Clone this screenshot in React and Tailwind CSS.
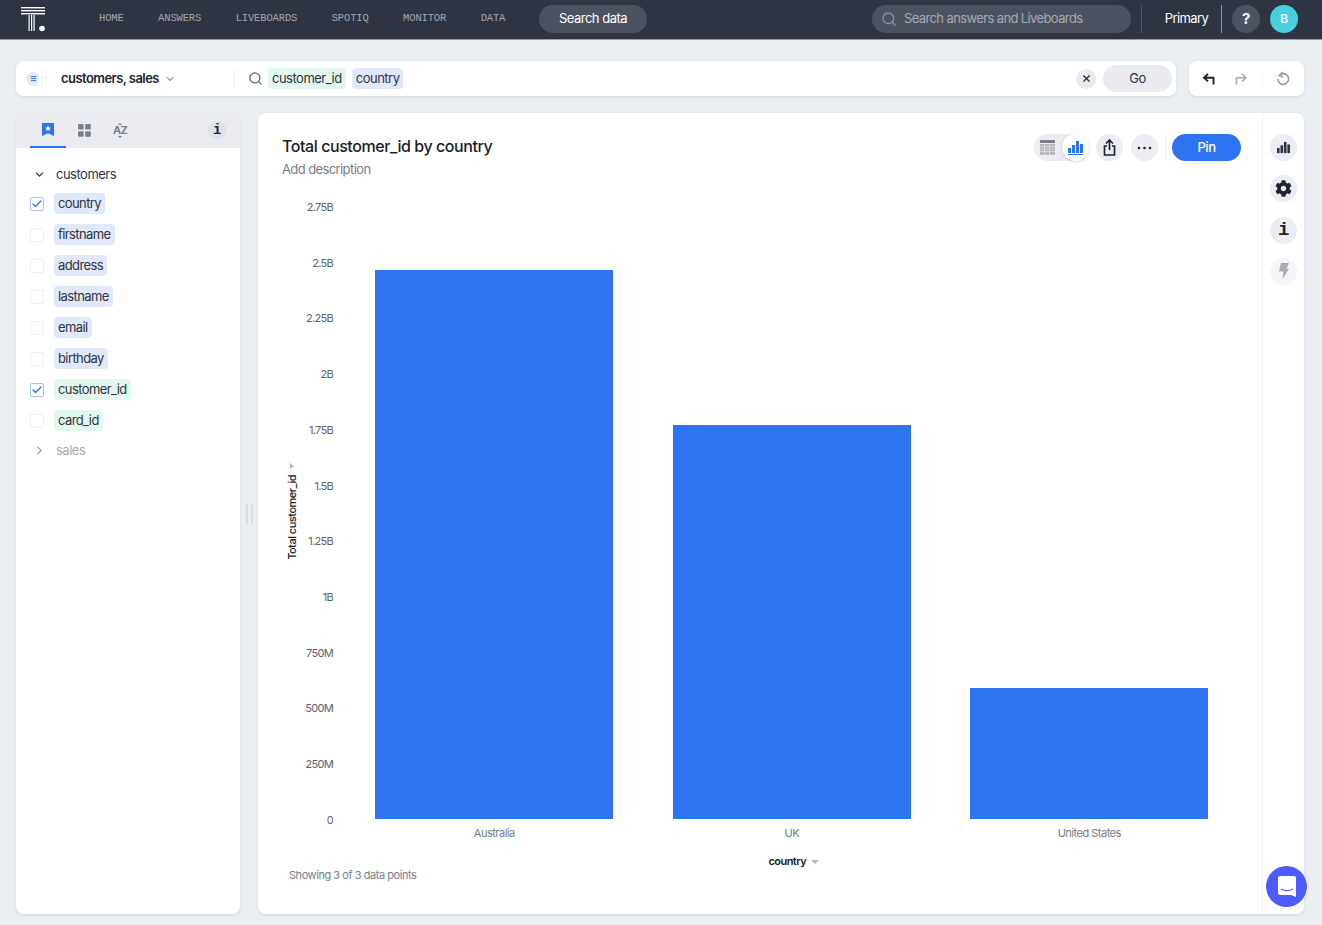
import { Search, X, ChevronDown, ChevronRight, Check } from 'lucide-react';
import { FaCog } from 'react-icons/fa';

const navItems = ['HOME', 'ANSWERS', 'LIVEBOARDS', 'SPOTIQ', 'MONITOR', 'DATA'];

const columns = [
  { name: 'country', checked: true, attr: true },
  { name: 'firstname', attr: true },
  { name: 'address', attr: true },
  { name: 'lastname', attr: true },
  { name: 'email', attr: true },
  { name: 'birthday', attr: true },
  { name: 'customer_id', checked: true },
  { name: 'card_id' },
];

const yTicks = ['2.75B', '2.5B', '2.25B', '2B', '1.75B', '1.5B', '1.25B', '1B', '750M', '500M', '250M', '0'];

const bars = [
  { label: 'Australia', height: 'h-[549px]' },
  { label: 'UK', height: 'h-[394px]' },
  { label: 'United States', height: 'h-[131px]' },
];

function Logo() {
  return (
    <svg width="25" height="26" viewBox="0 0 25 26" className="text-white" fill="currentColor">
      <rect x="0" y="0" width="24" height="1.400" />
      <rect x="0" y="3" width="24" height="1.400" />
      <rect x="0" y="6" width="24" height="1.400" />
      <rect x="7.500" y="8" width="1.200" height="16" />
      <rect x="10" y="8" width="1.200" height="16" />
      <rect x="12.500" y="8" width="1.200" height="16" />
      <circle cx="21" cy="21.500" r="2.800" />
    </svg>
  );
}

function TopNav() {
  return (
    <div className="h-10 shrink-0 bg-[#2f3442] border-b border-[#9a9ea8] flex items-center pb-px">
      <div className="w-[99px] pl-[21px] shrink-0 pt-[2px]">
        <Logo />
      </div>
      <div className="flex gap-[34.5px] w-[440px] shrink-0 font-['Liberation_Mono',monospace] text-[10.5px] tracking-[-0.15px] text-[#a3a7b0]">
        {navItems.map((item) => (
          <span key={item}>{item}</span>
        ))}
      </div>
      <div className="w-[108px] h-7 rounded-full bg-[#4d5261] text-white text-[13px] flex items-center justify-center">
        Search data
      </div>
      <div className="ml-[225px] w-[259px] h-7 rounded-full bg-[#4d5261] text-[#a6aab3] text-[13px] tracking-[-0.62px] flex items-center pl-[9px] gap-[7px]">
        <Search size={16} className="text-[#8d919b]" />
        <span>Search answers and Liveboards</span>
      </div>
      <div className="ml-[10px] w-px h-7 bg-[#4d5261]" />
      <div className="w-[79px] text-center text-white text-[13px] tracking-[-0.6px] pl-[10px]">Primary</div>
      <div className="w-px h-7 bg-[#8b8f99]" />
      <div className="ml-[10px] w-7 h-7 rounded-full bg-[#4d5261] text-white font-bold text-[15px] flex items-center justify-center">?</div>
      <div className="ml-[10px] w-7 h-7 rounded-full bg-[#48d0e0] text-white text-[12px] font-medium flex items-center justify-center">B</div>
    </div>
  );
}

function Chip({ children, attr }) {
  return (
    <span className={`h-[21px] px-[4px] rounded-[4px] text-[13px] leading-[20px] text-[#2f3442] ${attr ? 'bg-[#e0e8fa]' : 'bg-[#e2f8ef]'}`}>
      {children}
    </span>
  );
}

function SearchBar() {
  return (
    <div className="flex mt-[21px] ml-4 mr-[18px] h-[35px] gap-[13px]">
      <div className="flex-1 bg-white rounded-[8px] shadow-[0_1px_3px_rgba(40,50,70,0.12)] flex items-center">
        <div className="w-[23px] flex justify-end shrink-0">
          <div className="w-3 h-[14px] rounded-full bg-[#dfe7fb] flex flex-col items-center justify-center gap-[1px]">
            <span className="w-[5px] h-px bg-[#3f7bf0]" />
            <span className="w-[5px] h-px bg-[#3f7bf0]" />
            <span className="w-[5px] h-px bg-[#3f7bf0]" />
          </div>
        </div>
        <div className="ml-[2px] w-px h-5 bg-[#f0f1f4]" />
        <div className="w-[192px] shrink-0 pl-[19px] flex items-center gap-[5px] text-[13px] font-semibold tracking-[-0.55px] text-[#1f2430]">
          customers, sales
          <ChevronDown size={12} className="text-[#4b505c]" />
        </div>
        <div className="w-px h-5 bg-[#f0f1f4]" />
        <Search size={15} className="ml-[13px] text-[#5d6270]" />
        <div className="ml-[5px] flex gap-[6px]">
          <Chip>customer_id</Chip>
          <Chip attr>country</Chip>
        </div>
        <div className="ml-auto w-5 h-5 rounded-full bg-[#eaebf0] flex items-center justify-center">
          <X size={11} strokeWidth={2.5} className="text-[#1f2430]" />
        </div>
        <div className="ml-[7px] mr-[4px] w-[69px] h-[27px] rounded-full bg-[#eaebf0] text-[13px] text-[#2f3442] flex items-center justify-center">Go</div>
      </div>
      <div className="w-[115px] bg-white rounded-[8px] shadow-[0_1px_3px_rgba(40,50,70,0.12)] flex items-center pl-[13px]">
        <svg width="14" height="14" viewBox="0 0 14 14" fill="none" stroke="#1f2430" strokeWidth="1.9">
          <path d="M6 2 2 5.700 6 9.400M2 5.700h9.500v6.800" />
        </svg>
        <svg className="ml-[18px]" width="14" height="14" viewBox="0 0 14 14" fill="none" stroke="#a9acb4" strokeWidth="1.6">
          <path d="M8 2l4 3.700L8 9.400M12 5.700H2.500v6.800" />
        </svg>
        <div className="ml-[14px] w-px h-5 bg-[#f4f5f7]" />
        <svg className="ml-[13px]" width="15" height="15" viewBox="0 0 14 14" fill="none" stroke="#9a9da6" strokeWidth="1.5">
          <path d="M3 4.200a5 5 0 1 1-1.200 3.300M6.300 1 3 4.200l3.600 1.400" />
        </svg>
      </div>
    </div>
  );
}

function ColumnRow({ name, checked, attr }) {
  return (
    <div className="h-[31px] flex items-center pl-[14px] tracking-[-0.6px]">
      <div className={`w-[14px] h-[14px] rounded-[2px] border flex items-center justify-center ${checked ? 'border-[#a9c3f7]' : 'border-[#eeeff2]'}`}>
        {checked && <Check size={12} strokeWidth={2.6} className="text-[#2e74f0]" />}
      </div>
      <div className="ml-[10px] flex">
        <Chip attr={attr}>{name}</Chip>
      </div>
    </div>
  );
}

function SidePanel() {
  return (
    <div className="w-[224px] shrink-0 bg-white rounded-[8px] shadow-[0_1px_3px_rgba(40,50,70,0.12)] overflow-hidden">
      <div className="h-[35px] bg-[#eaecf1] flex items-center relative">
        <div className="ml-[14px] w-[36px] h-[35px] border-b-2 border-[#2e74f0] flex items-center justify-center">
          <svg width="12" height="13" viewBox="0 0 12 13" fill="#2e74f0">
            <path d="M0 0h12v13L6 10.300 0 13z" />
            <path fill="#fff" d="m6 2.600.9 1.900 2 .2-1.500 1.400.4 2L6 7.100l-1.800 1 .4-2L3.100 4.700l2-.2z" />
          </svg>
        </div>
        <svg className="ml-[12px]" width="13" height="13" viewBox="0 0 13 13" fill="#7a7f8b">
          <rect width="5.600" height="5.600" rx="1.200" />
          <rect x="7.200" width="5.600" height="5.600" rx="1.200" />
          <rect y="7.200" width="5.600" height="5.600" rx="1.200" />
          <rect x="7.200" y="7.200" width="5.600" height="5.600" rx="1.200" />
        </svg>
        <div className="ml-[22px] flex flex-col items-center gap-[1px] text-[#7a7f8b]">
          <svg width="4" height="2" viewBox="0 0 4 2" fill="currentColor"><path d="M2 0l2 2H0z" /></svg>
          <span className="text-[11px] leading-[9px] font-bold tracking-[-0.6px]">AZ</span>
          <svg width="4" height="2" viewBox="0 0 4 2" fill="currentColor"><path d="M0 0h4L2 2z" /></svg>
        </div>
        <div className="absolute left-[192px] top-[8px] w-[18px] h-[18px] rounded-full bg-[#dfe1e8] flex items-center justify-center font-['Liberation_Mono',monospace] font-bold text-[14px] text-[#1f2430]">i</div>
      </div>
      <div className="pt-[13px] h-[40px] flex items-center text-[13px] text-[#2f3442]">
        <ChevronDown size={13} strokeWidth={2.4} className="ml-[17px] text-[#2f3442]" />
        <span className="ml-[10px]">customers</span>
      </div>
      {columns.map((c) => (
        <ColumnRow key={c.name} {...c} />
      ))}
      <div className="h-[29px] flex items-center text-[13px] text-[#a9acb4]">
        <ChevronRight size={13} className="ml-[17px] text-[#9a9da6]" />
        <span className="ml-[10px]">sales</span>
      </div>
    </div>
  );
}

function IconCircle({ children, faded }) {
  return (
    <div className={`w-[27px] h-[27px] rounded-full flex items-center justify-center ${faded ? 'bg-[#f5f5f8]' : 'bg-[#ecedf2]'}`}>
      {children}
    </div>
  );
}

function BarIcon({ color }) {
  return (
    <svg width="13" height="13" viewBox="1 2 15 13" fill={color}>
      <rect x="1" y="9" width="3" height="6" />
      <rect x="5" y="6" width="3" height="9" />
      <rect x="9" y="2" width="3" height="13" />
      <rect x="13" y="5" width="3" height="10" />
    </svg>
  );
}

function ChartHeader() {
  return (
    <div className="flex pl-6 pr-[21px] pt-[21px]">
      <div className="flex-1">
        <div className="text-[16px] leading-[24px] font-medium tracking-[-0.43px] text-[#1a1d24]">Total customer_id by country</div>
        <div className="text-[13px] leading-[20px] mt-[1px] tracking-[-0.6px] text-[#777e8b]">Add description</div>
      </div>
      <div className="flex items-start">
        <div className="w-[55px] h-[27px] rounded-full bg-[#ecedf2] flex items-center justify-between">
          <svg className="ml-[6px]" width="15" height="15" viewBox="0 0 15 15">
            <rect width="15" height="3" fill="#7c7f86" />
            <path d="M0 4h15v11H0z" fill="#b5b7bc" />
            <path d="M0 6.500h15M0 9h15M0 11.500h15M4.500 4v11M9.500 4v11" stroke="#ecedf2" strokeWidth="0.6" />
          </svg>
          <div className="w-[27px] h-[27px] rounded-full bg-white shadow-[0_1px_3px_rgba(40,50,70,0.2)] flex items-center justify-center">
            <svg width="15" height="15" viewBox="0 0 15 15" fill="#2e74f0">
              <rect x="0" y="8" width="3" height="5" />
              <rect x="4" y="5" width="3" height="8" />
              <rect x="8" y="1" width="3" height="12" />
              <rect x="12" y="4" width="3" height="9" />
              <rect x="0" y="14" width="15" height="1" />
            </svg>
          </div>
        </div>
        <div className="ml-[7px]">
          <IconCircle>
            <svg width="13" height="17" viewBox="0 0 13 17" fill="none" stroke="#1f2430" strokeWidth="1.7">
              <path d="M6.500 11V1.500M3 4.500l3.500-3.500L10 4.500M4 7H1.500v9h10V7H9" />
            </svg>
          </IconCircle>
        </div>
        <div className="ml-2">
          <IconCircle>
            <svg width="15" height="4" viewBox="0 0 15 4" fill="#1f2430">
              <circle cx="2" cy="2" r="1.300" />
              <circle cx="7.500" cy="2" r="1.300" />
              <circle cx="13" cy="2" r="1.300" />
            </svg>
          </IconCircle>
        </div>
        <div className="ml-[7px] w-px h-[27px] bg-[#f0f1f4]" />
        <div className="ml-[6px] w-[69px] h-[27px] rounded-full bg-[#2e74f0] text-white text-[13px] font-medium flex items-center justify-center">Pin</div>
      </div>
    </div>
  );
}

function Chart() {
  return (
    <div className="flex pl-[24px] pr-[24px] mt-[21px] flex-1">
      <div className="w-[16px] shrink-0 flex flex-col items-center justify-center mb-[25px] ml-[2px] mr-[1px] pb-[11px]">
        <svg width="4" height="6" viewBox="0 0 4 6" fill="#b5b7bc" className="mb-[6px]">
          <path d="M0 0l4 3-4 3z" />
        </svg>
        <span className="[writing-mode:vertical-rl] rotate-180 text-[11px] leading-[16px] font-medium tracking-[-0.5px] text-[#1a1d24]">Total customer_id</span>
      </div>
      <div className="w-[32px] shrink-0 flex flex-col justify-between items-end text-[11px] leading-[14px] tracking-[-0.7px] text-[#5c6170] h-[627px]">
        {yTicks.map((t) => (
          <span key={t}>{t}</span>
        ))}
      </div>
      <div className="flex-1 ml-[12.5px] grid grid-cols-3 h-[647px] items-end">
        {bars.map((b) => (
          <div key={b.label} className="flex flex-col items-center">
            <div className={`w-[238px] bg-[#2e74f0] ${b.height}`} />
            <div className="h-[28px] flex items-center text-[11px] text-[#777b85]">{b.label}</div>
          </div>
        ))}
      </div>
    </div>
  );
}

function MainCard() {
  return (
    <div className="flex-1 bg-white rounded-[8px] shadow-[0_1px_3px_rgba(40,50,70,0.12)] flex overflow-hidden">
      <div className="flex-1 flex flex-col">
        <ChartHeader />
        <Chart />
        <div className="flex pl-[31px] pb-[31px] text-[11px] tracking-[-0.45px] text-[#777e8b]">
          <span className="mt-[7px]">Showing 3 of 3 data points</span>
          <span className="ml-[352px] -mt-[6px] h-[16px] flex items-center gap-[5px] font-semibold tracking-[-0.55px] text-[#1a1d24]">
            country
            <svg width="8" height="4" viewBox="0 0 8 4" fill="#b5b7bc">
              <path d="M0 0h8L4 4z" />
            </svg>
          </span>
        </div>
      </div>
      <div className="w-[42px] shrink-0 border-l border-[#f0f1f4] flex flex-col items-center pt-[21px] gap-[14.3px]">
        <IconCircle><BarIcon color="#2f3442" /></IconCircle>
        <IconCircle><FaCog size={17} className="text-[#1f2430]" /></IconCircle>
        <IconCircle>
          <span className="font-['Liberation_Mono',monospace] font-bold text-[19px] text-[#1f2430]">i</span>
        </IconCircle>
        <IconCircle faded>
          <svg width="10" height="16" viewBox="0 0 10 16" fill="#a9acb4">
            <path d="M2 0h8L7.500 6H10L3.500 16 4.500 8.500H0z" />
          </svg>
        </IconCircle>
      </div>
    </div>
  );
}

export default function App() {
  return (
    <div className="h-[925px] w-[1322px] overflow-hidden bg-[#eceff2] flex flex-col relative font-['Inter',sans-serif] tracking-[-0.5px]">
      <TopNav />
      <SearchBar />
      <div className="flex flex-1 ml-4 mr-[18px] mt-[17px] mb-[11px] min-h-0">
        <SidePanel />
        <div className="w-[18px] shrink-0 flex items-center justify-center gap-[3px]">
          <span className="w-[2px] h-5 bg-[#d9dce1]" />
          <span className="w-[2px] h-5 bg-[#d9dce1]" />
        </div>
        <MainCard />
      </div>
      <div className="absolute left-[1266px] top-[866px] w-[41px] h-[41px] rounded-full bg-[#4d5cff] flex items-center justify-center">
        <svg width="18" height="21" viewBox="0 0 18 21">
          <path d="M2 0h14a2 2 0 0 1 2 2v19l-5-2H2a2 2 0 0 1-2-2V2a2 2 0 0 1 2-2z" fill="#fff" />
          <path d="M3 13c3.500 2 8.500 2 12 0" fill="none" stroke="#4d5cff" strokeWidth="1.200" />
        </svg>
      </div>
    </div>
  );
}
